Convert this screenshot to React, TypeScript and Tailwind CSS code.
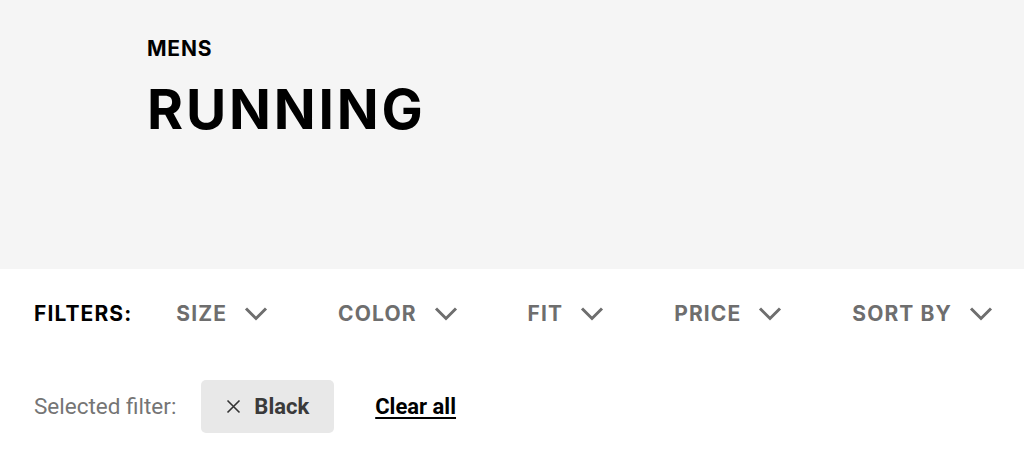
import React from 'react';

const filters = ['SIZE', 'COLOR', 'FIT', 'PRICE', 'SORT BY'];

const Chevron = () => (
  <svg width="24" height="15" viewBox="0 0 24 15" fill="none" className="shrink-0">
    <path d="M2 2.5l10 10 10-10" stroke="currentColor" strokeWidth="3" strokeLinejoin="miter" />
  </svg>
);

const App: React.FC = () => {
  return (
    <div className="w-full min-h-screen bg-white" style={{ fontFamily: 'Inter, "Liberation Sans", sans-serif' }}>
      <header className="bg-[#f5f5f5] h-[269px] pl-[147px] pt-[35px]">
        <p className="text-[21px] leading-[28px] font-bold text-black tracking-[0.8px]">MENS</p>
        <h1 className="mt-[14px] text-[55px] leading-[64px] font-bold text-black tracking-[2.8px]">RUNNING</h1>
      </header>

      <div className="flex items-center pl-[34px] pr-[31px] h-[89px]">
        <span className="text-[21px] font-bold text-black tracking-[1.1px] mr-[44px]">FILTERS:</span>
        <div className="flex flex-1 items-center justify-between">
          {filters.map(f => (
            <button key={f} className="flex items-center gap-[17px] text-[#6e6e6e]">
              <span className="text-[21px] font-bold tracking-[1.1px]">{f}</span>
              <Chevron />
            </button>
          ))}
        </div>
      </div>

      <div className="flex items-center px-[34px] pt-[22px]" style={{ fontFamily: 'Roboto, "Liberation Sans", sans-serif' }}>
        <span className="text-[22.5px] text-[#757575]">Selected filter:</span>
        <div className="ml-[25px] flex items-center h-[53px] px-[25px] gap-[13px] bg-[#e8e8e8] rounded-[5px]">
          <svg width="15" height="15" viewBox="0 0 15 15" fill="none" className="text-[#333]">
            <path d="M1.5 1.5l12 12M13.5 1.5l-12 12" stroke="currentColor" strokeWidth="1.6" />
          </svg>
          <span className="text-[22px] font-bold text-[#3a3a3a]">Black</span>
        </div>
        <a href="#" className="ml-[41px] text-[22px] font-bold text-black underline decoration-2 underline-offset-[3px]">
          Clear all
        </a>
      </div>
    </div>
  );
};

export default App;
